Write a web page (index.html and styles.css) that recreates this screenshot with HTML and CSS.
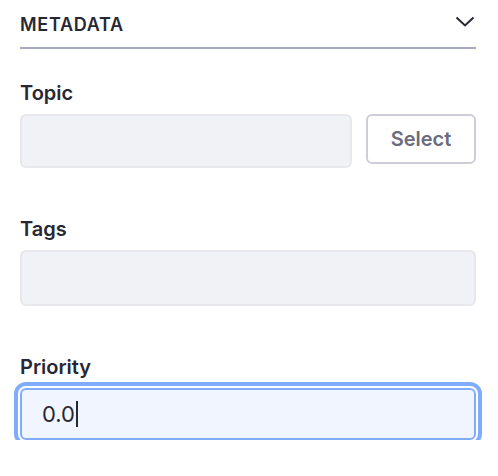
FILE: index.html
```html
<!DOCTYPE html>
<html>
<head>
<meta charset="utf-8">
<link rel="stylesheet" href="styles.css">
</head>
<body>
<div class="panel">
  <div class="header">
    <span class="title">METADATA</span>
    <svg class="chev" width="20" height="12" viewBox="0 0 20 12"><path d="M1.5 1.5 L10 9.5 L18.5 1.5" fill="none" stroke="#272833" stroke-width="2"/></svg>
  </div>
  <div class="field">
    <label class="label">Topic</label>
    <div class="row">
      <div class="input grow short"></div>
      <button class="btn">Select</button>
    </div>
  </div>
  <div class="field">
    <label class="label">Tags</label>
    <div class="input"></div>
  </div>
  <div class="field">
    <label class="label">Priority</label>
    <div class="input focus"><span class="val">0.0</span><span class="caret"></span></div>
  </div>
</div>
</body>
</html>
```
FILE: styles.css
```css
html, body { margin: 0; padding: 0; background: #fff; }
body { font-family: Inter, "Noto Sans", sans-serif; color: #272833; }
.panel { padding: 0 22px 0 20px; }
.header {
  height: 47px;
  border-bottom: 2px solid #a7a9bc;
  display: flex;
  align-items: center;
  justify-content: space-between;
}
.title { font-size: 18px; font-weight: 600; letter-spacing: 0.7px; margin-top: 1px; }
.chev { margin-right: 1px; margin-top: -4px; }
.field { margin-top: 32px; }
.field + .field { margin-top: 49px; }
.label { display: block; font-size: 20px; font-weight: 600; line-height: 24px; margin-bottom: 9px; }
.row { display: flex; gap: 14px; align-items: flex-start; }
.grow { flex: 1; }
.input {
  box-sizing: border-box;
  height: 56px;
  background: #f1f2f5;
  border: 2px solid #e7e7ed;
  border-radius: 6px;
}
.input.short { height: 54px; }
.btn {
  box-sizing: border-box;
  width: 110px;
  height: 50px;
  background: #fff;
  border: 2px solid #cdced9;
  border-radius: 6px;
  font-family: Inter, "Noto Sans", sans-serif;
  font-size: 20px;
  font-weight: 600;
  color: #6b6c7e;
  padding: 0;
}
.input.focus {
  height: 52px;
  background: #f0f5ff;
  border-color: #80acff;
  box-shadow: 0 0 0 2px #fff, 0 0 0 6px #80acff;
  display: flex;
  align-items: center;
  padding-left: 20px;
}
.val { font-size: 22px; color: #272833; }
.caret { width: 2px; height: 26px; background: #272833; margin-left: 1px; }
```
